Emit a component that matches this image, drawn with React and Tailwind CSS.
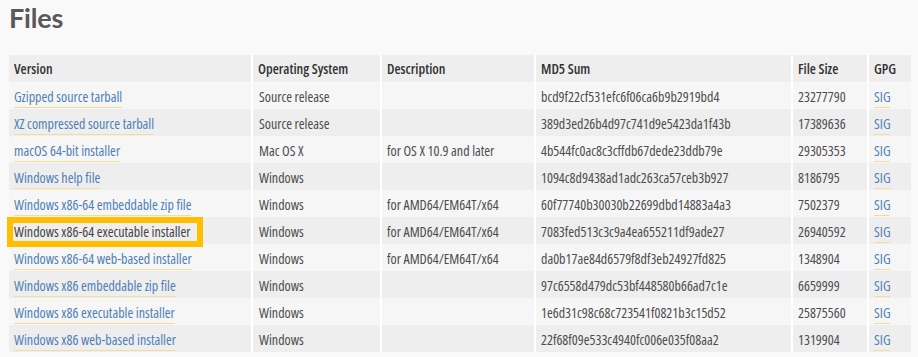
import React from "react";

const rows = [
  ["Gzipped source tarball", "Source release", "", "bcd9f22cf531efc6f06ca6b9b2919bd4", "23277790"],
  ["XZ compressed source tarball", "Source release", "", "389d3ed26b4d97c741d9e5423da1f43b", "17389636"],
  ["macOS 64-bit installer", "Mac OS X", "for OS X 10.9 and later", "4b544fc0ac8c3cffdb67dede23ddb79e", "29305353"],
  ["Windows help file", "Windows", "", "1094c8d9438ad1adc263ca57ceb3b927", "8186795"],
  ["Windows x86-64 embeddable zip file", "Windows", "for AMD64/EM64T/x64", "60f77740b30030b22699dbd14883a4a3", "7502379"],
  ["Windows x86-64 executable installer", "Windows", "for AMD64/EM64T/x64", "7083fed513c3c9a4ea655211df9ade27", "26940592", true],
  ["Windows x86-64 web-based installer", "Windows", "for AMD64/EM64T/x64", "da0b17ae84d6579f8df3eb24927fd825", "1348904"],
  ["Windows x86 embeddable zip file", "Windows", "", "97c6558d479dc53bf448580b66ad7c1e", "6659999"],
  ["Windows x86 executable installer", "Windows", "", "1e6d31c98c68c723541f0821b3c15d52", "25875560"],
  ["Windows x86 web-based installer", "Windows", "", "22f68f09e533c4940fc006e035f08aa2", "1319904"],
];

const headers = ["Version", "Operating System", "Description", "MD5 Sum", "File Size", "GPG"];

function Link({ children, dark }) {
  return (
    <span
      className={
        "border-b border-[#f6dd96] pb-[1px] " +
        (dark ? "text-[#444444]" : "text-[#4f7fb5]")
      }
    >
      {children}
    </span>
  );
}

export default function App() {
  return (
    <div className="w-[918px] h-[357px] bg-[#f9f9f9] overflow-hidden text-[#4d4d4d] font-['Open_Sans',sans-serif]">
      <h1 className="pl-[9px] pt-[4px] h-[55px] text-[27px] leading-[27px] font-bold tracking-[-0.2px] text-[#595959] font-[Lato,sans-serif]">
        Files
      </h1>
      <table className="ml-[9px] border-collapse text-[14px] [font-stretch:85%] table-fixed w-[902px]">
        <colgroup>
          <col className="w-[243px]" />
          <col className="w-[129px]" />
          <col className="w-[154px]" />
          <col className="w-[257px]" />
          <col className="w-[76px]" />
          <col className="w-[43px]" />
        </colgroup>
        <thead>
          <tr className="h-[27px] bg-[#eeeeee] border-b border-[#fafafa]">
            {headers.map((h, i) => (
              <th
                key={h}
                className={
                  "text-left font-semibold text-[#333333] pl-[5px] py-0 " +
                  (i > 0 ? "border-l-2 border-white" : "")
                }
              >
                {h}
              </th>
            ))}
          </tr>
        </thead>
        <tbody>
          {rows.map((r, idx) => (
            <tr
              key={r[0]}
              className={"h-[27px] " + (idx % 2 === 0 ? "bg-[#f6f6f6]" : "bg-[#eeeeee]")}
            >
              <td className="pl-[5px] pt-[1px] pb-0 relative">
                {r[5] && (
                  <span className="absolute left-[-2px] top-0 w-[196px] h-[30px] border-[6px] border-[#ffbf00]" />
                )}
                <Link dark={r[5]}>{r[0]}</Link>
              </td>
              <td className="pl-[6px] pt-[1px] pb-0 border-l-2 border-white">{r[1]}</td>
              <td className="pl-[5px] pt-[1px] pb-0 border-l-2 border-white">{r[2]}</td>
              <td className="pl-[5px] pt-[1px] pb-0 border-l-2 border-white">{r[3]}</td>
              <td className="pl-[5px] pt-[1px] pb-0 border-l-2 border-white">{r[4]}</td>
              <td className="pl-[5px] pt-[1px] pb-0 border-l-2 border-white">
                <Link>SIG</Link>
              </td>
            </tr>
          ))}
        </tbody>
      </table>
    </div>
  );
}
